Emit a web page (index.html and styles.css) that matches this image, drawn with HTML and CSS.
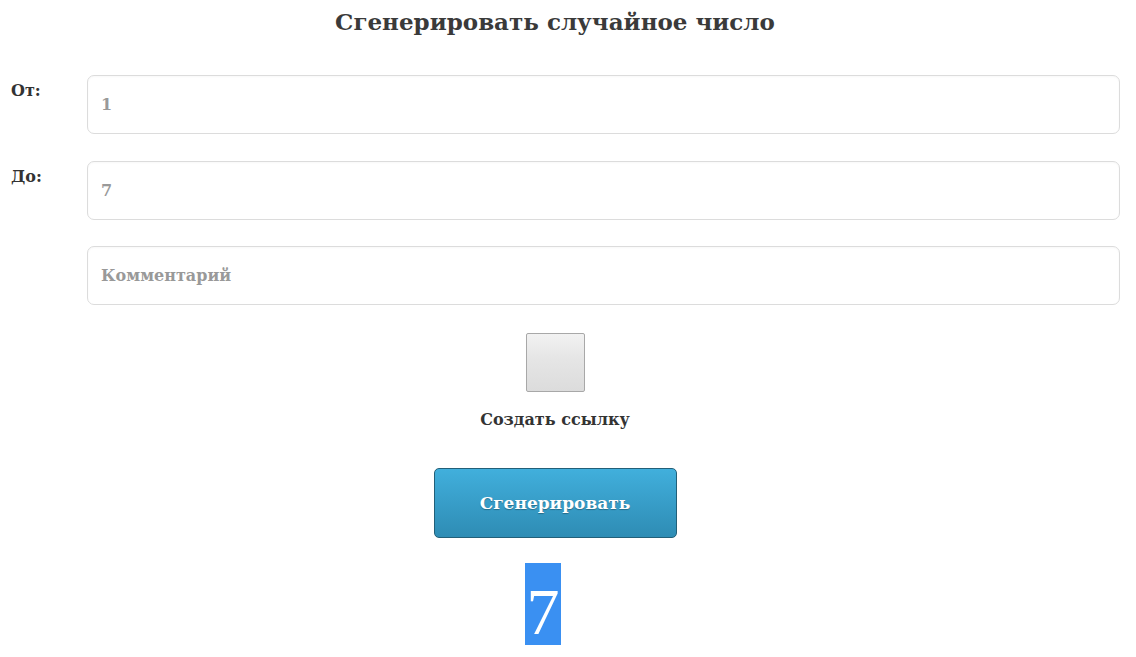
FILE: index.html
```html
<!DOCTYPE html>
<html lang="ru">
<head>
    <meta charset="UTF-8">
    <meta name="viewport" content="width=device-width, initial-scale=1.0">
    <title>Сгенерировать случайное число</title>
    <link rel="stylesheet" href="styles.css">
</head>
<body>
    <h1>Сгенерировать случайное число</h1>

    <form id="random-form">
        <div class="field-row">
            <label for="from">От:</label>
            <input id="from" type="text" value="1">
        </div>
        <div class="field-row">
            <label for="to">До:</label>
            <input id="to" type="text" value="7">
        </div>
        <div class="field-row">
            <span></span>
            <input id="comment" type="text" placeholder="Комментарий">
        </div>

        <div class="centered">
            <div class="link-option">
                <span class="fake-checkbox"></span>
                <span class="link-label">Создать ссылку</span>
            </div>

            <button type="submit" class="generate-btn">Сгенерировать</button>

            <div class="result">7</div>
        </div>
    </form>
</body>
</html>
```

FILE: styles.css
```css
body {
    font-family: "DejaVu Serif", "Liberation Serif", serif;
    font-weight: 700;
    color: #333;
    margin: 0;
    background: #fff;
}

h1 {
    margin: 0;
    padding: 6px 26px 0 0;
    text-align: center;
    font-size: 23px;
    line-height: 32px;
    color: #3a3a3a;
}

#random-form {
    display: flex;
    flex-direction: column;
    padding: 37px 16px 0 11px;
}

.field-row {
    display: grid;
    grid-template-columns: 76px 1fr;
    margin-bottom: 27px;
}

.field-row:nth-child(2) {
    margin-bottom: 26px;
}

.field-row > label {
    font-size: 16px;
    padding-top: 6px;
}

.field-row > input {
    height: 59px;
    box-sizing: border-box;
    border: solid 1px #dcdcdc;
    border-radius: 7px;
    padding: 0 13px;
    font-family: "DejaVu Serif", "Liberation Serif", serif;
    font-weight: 700;
    font-size: 16px;
    color: #999;
    box-shadow: inset 0 1px 2px #00000008;
    outline: none;
}

.field-row > input::placeholder {
    color: #999;
}

.field-row:nth-child(3) {
    margin-bottom: 28px;
}

.centered {
    display: flex;
    flex-direction: column;
    align-items: center;
    margin: 0 -16px 0 -11px;
    padding-right: 26px;
}

.link-option {
    display: flex;
    flex-direction: column;
    align-items: center;
    gap: 18px;
}

.fake-checkbox {
    width: 59px;
    height: 59px;
    box-sizing: border-box;
    border: solid 1px #a8a8a8;
    border-radius: 2px;
    background: linear-gradient(#f2f2f2, #e6e6e6 40%, #dcdcdc);
}

.link-label {
    font-size: 16px;
    color: #333;
}

.generate-btn {
    margin-top: 39px;
    width: 243px;
    height: 70px;
    border: solid 1px #225f78;
    border-radius: 5px;
    background: linear-gradient(#41afdc, #2e8cb4);
    color: #fff;
    font-family: "DejaVu Serif", "Liberation Serif", serif;
    font-weight: 700;
    font-size: 17px;
    text-shadow: 0 1px 1px #0000004d;
    cursor: pointer;
}

.result {
    margin: 25px 24px 0 0;
    width: 36px;
    height: 82px;
    background-color: #3a90f2;
    color: #fff;
    font-family: "Liberation Serif", serif;
    font-size: 66px;
    font-weight: 400;
    line-height: 98px;
    text-align: center;
    overflow: hidden;
}
```
